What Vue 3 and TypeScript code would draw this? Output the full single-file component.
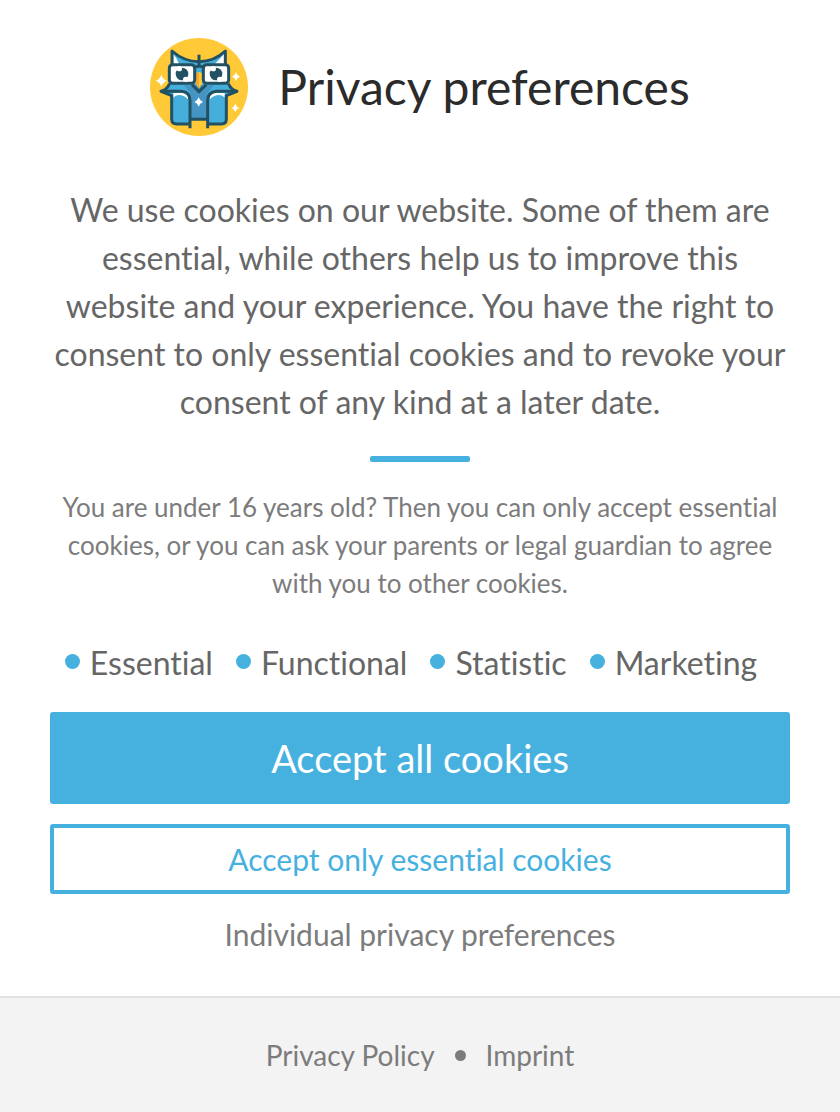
<script setup lang="ts">
const categories: string[] = ['Essential', 'Functional', 'Statistic', 'Marketing']
</script>

<template>
  <main class="dialog">
    <div class="content">
      <header class="head">
        <svg class="logo" viewBox="18 18 294 294" aria-hidden="true">
          <circle cx="165" cy="165" r="147" fill="#ffc937" />
          <path d="M84 102V57Q120 89 165 89T244 57V102L250 155 229 174H99L76 155Z" fill="#46aedb" />
          <path d="M88 98V66Q98 78 106 98ZM240 98V66Q230 78 210 98Z" fill="#fff" />
          <path d="M51 178Q67 175 77 157H253Q263 175 279 178L247 191V262Q247 276 232 276H98Q83 276 83 262V191Z" fill="#46aedb" />
          <path d="M120 160H210L190 182V261H139V182Z" fill="#4595c4" />
          <path d="M139 264H190V296H139Z" fill="#ffc937" />
          <path d="M88 183H119Q134 186 134 204Q122 189 104 189Q94 190 88 197ZM242 183H211Q196 186 196 204Q208 189 226 189Q236 190 242 197Z" fill="#fff" />
          <g fill="none" stroke="#215162" stroke-width="9" stroke-linejoin="round">
            <path d="M84 102V57Q120 89 165 89T244 57V102" />
            <path d="M165 68V104" />
            <path d="M77 155Q67 175 51 178L83 191V262Q83 276 98 276H138M253 155Q263 175 279 178L247 191V262Q247 276 232 276H191" />
            <path d="M60 178H112Q138 180 138 206V289M270 178H218Q191 180 191 206V289M138 262H191" />
            <path d="M144 158L165 179 187 158" />
          </g>
          <path d="M155 123Q165 119 175 123V154L165 169 155 154Z" fill="#ffc937" />
          <path d="M155 123H165V169L155 154Z" fill="#f5a72c" />
          <g fill="#fff" stroke="#215162" stroke-width="9">
            <rect x="76" y="98" width="76" height="56" rx="10" />
            <rect x="178" y="98" width="76" height="56" rx="10" />
            <path d="M148 108Q165 98 182 108" fill="none" />
          </g>
          <g fill="#215162">
            <circle cx="114" cy="126" r="19" />
            <circle cx="216" cy="126" r="19" />
          </g>
          <g fill="#fff">
            <circle cx="106" cy="110" r="8" />
            <circle cx="125" cy="142" r="8" />
            <circle cx="208" cy="110" r="8" />
            <circle cx="227" cy="142" r="8" />
            <path d="M52 128Q56 142 69 146Q56 150 52 164Q48 150 35 146Q48 142 52 128Z" />
            <path d="M276 121Q279 131 288 134Q279 137 276 146Q273 137 264 134Q273 131 276 121Z" />
            <path d="M274 215Q277 225 286 228Q277 231 274 240Q271 231 262 228Q271 225 274 215Z" />
            <path d="M164 196Q167 206 177 210Q167 214 164 224Q161 214 151 210Q161 206 164 196Z" />
          </g>
        </svg>
        <h1>Privacy preferences</h1>
      </header>

      <p class="intro">
        We use cookies on our website. Some of them are essential, while others help us to improve
        this website and your experience. You have the right to consent to only essential cookies
        and to revoke your consent of any kind at a later date.
      </p>
      <hr class="rule" />
      <p class="age">
        You are under 16 years old? Then you can only accept essential cookies, or you can ask your
        parents or legal guardian to agree with you to other cookies.
      </p>

      <ul class="categories">
        <li v-for="name in categories" :key="name">{{ name }}</li>
      </ul>

      <button type="button" class="primary">Accept all cookies</button>
      <button type="button" class="secondary">Accept only essential cookies</button>
      <a class="individual" href="#preferences">Individual privacy preferences</a>
    </div>

    <footer class="foot">
      <a href="#privacy">Privacy Policy</a>
      <span class="dot"></span>
      <a href="#imprint">Imprint</a>
    </footer>
  </main>
</template>

<style>
body {
  margin: 0;
  background: #fff;
}
</style>

<style scoped>
.dialog {
  display: flex;
  flex-direction: column;
  min-height: 100vh;
  font-family: Lato, "Liberation Sans", sans-serif;
  font-variant-ligatures: none;
  color: #666;
  text-align: center;
}
.content {
  display: flex;
  flex-direction: column;
  padding: 38px 50px 42px;
}
.head {
  display: flex;
  align-items: center;
  justify-content: center;
  gap: 30px;
}
.logo {
  width: 98px;
  height: 98px;
  flex: none;
}
h1 {
  margin: 0;
  font-size: 48px;
  line-height: 60px;
  font-weight: 400;
  color: #2b2b2b;
}
.intro {
  margin: 50px 0 30px;
  font-size: 32px;
  line-height: 48px;
}
.rule {
  width: 100px;
  height: 6px;
  margin: 0 auto;
  border: 0;
  border-radius: 2px;
  background: #46b1df;
}
.age {
  margin: 26px 0 0;
  font-size: 26px;
  line-height: 38px;
  color: #7c7c7c;
}
.categories {
  display: flex;
  justify-content: center;
  gap: 23px;
  margin: 36px 0 24px;
  padding: 0 18px 0 0;
  list-style: none;
  font-size: 32px;
  line-height: 50px;
}
.categories li {
  display: flex;
  align-items: center;
  gap: 10px;
}
.categories li::before {
  content: "";
  width: 15px;
  height: 15px;
  margin-bottom: 4px;
  border-radius: 50%;
  background: #46b1df;
}
button {
  font-family: inherit;
  font-variant-ligatures: inherit;
  border: 4px solid #46b1df;
  border-radius: 3px;
  cursor: pointer;
}
.primary {
  padding: 18px;
  font-size: 38px;
  line-height: 48px;
  color: #fff;
  background: #46b1df;
}
.secondary {
  margin-top: 20px;
  padding: 11px;
  font-size: 30px;
  line-height: 40px;
  color: #46b1df;
  background: #fff;
}
a {
  color: #7c7c7c;
  text-decoration: none;
}
.individual {
  align-self: center;
  margin-top: 20px;
  font-size: 30px;
  line-height: 40px;
}
.foot {
  flex: 1;
  display: flex;
  align-items: center;
  justify-content: center;
  gap: 20px;
  min-height: 112px;
  border-top: 2px solid #e1e1e1;
  background: #f3f3f3;
  font-size: 28px;
  line-height: 40px;
}
.dot {
  width: 11px;
  height: 11px;
  border-radius: 50%;
  background: #7c7c7c;
}
</style>
